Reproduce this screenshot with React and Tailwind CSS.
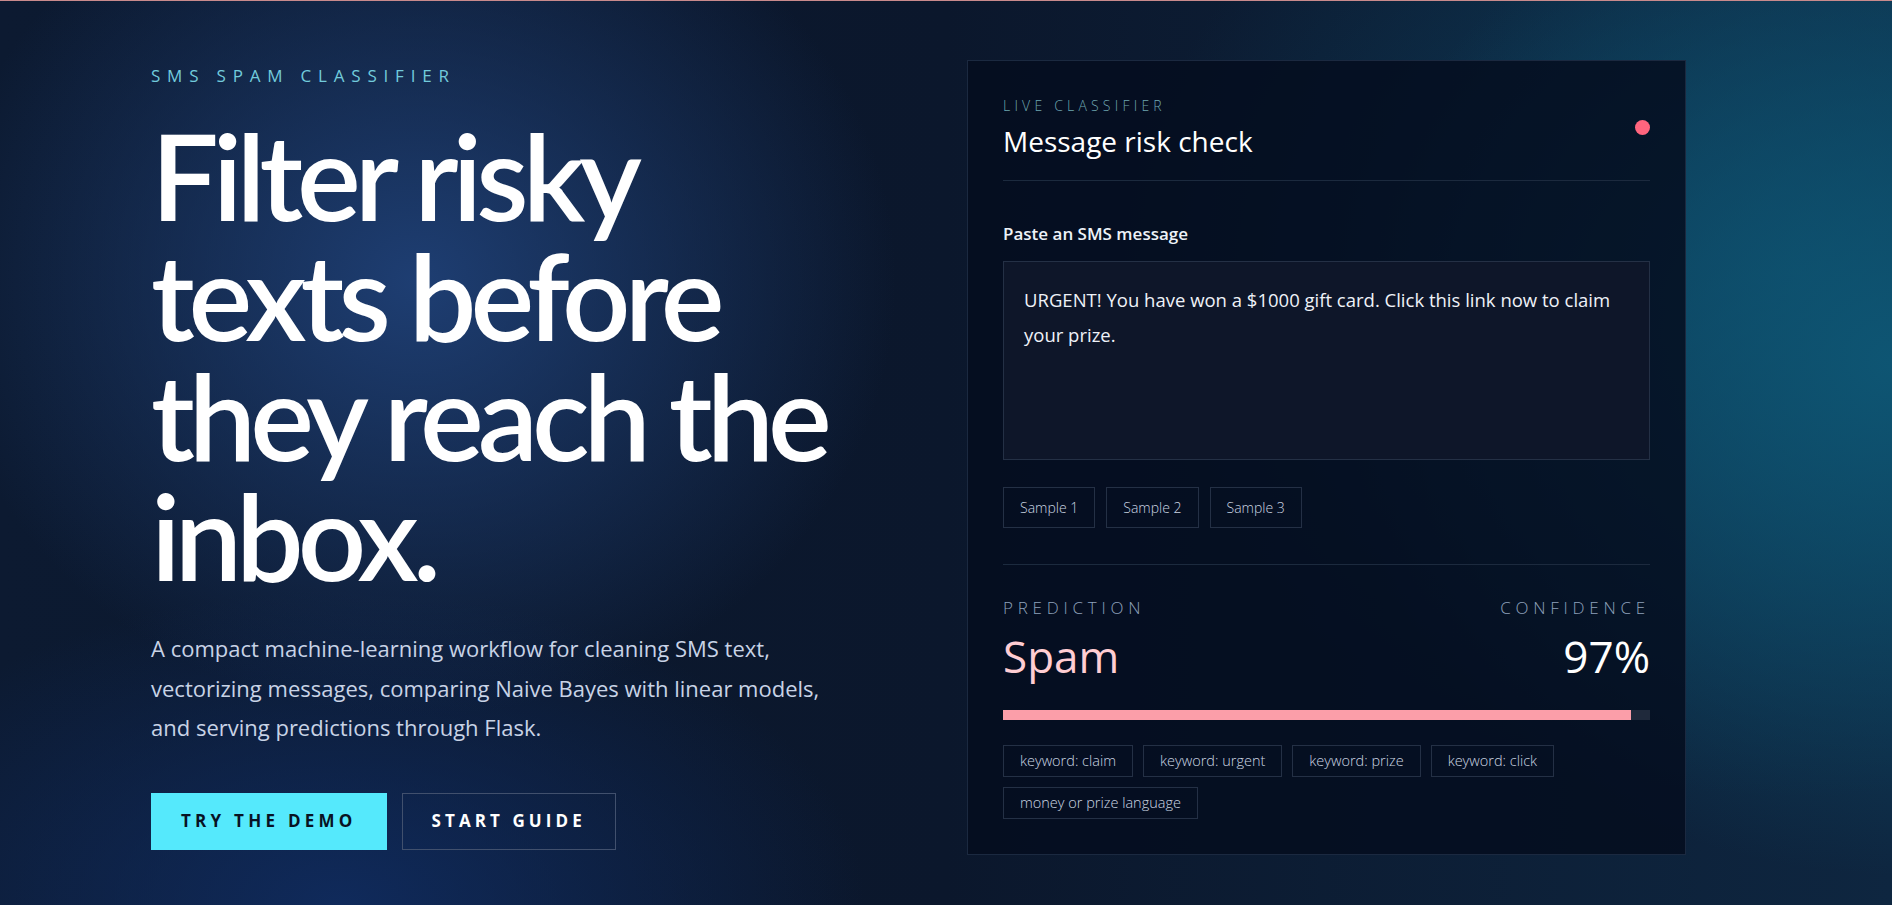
const samples = ['Sample 1', 'Sample 2', 'Sample 3']
const signals = ['keyword: claim', 'keyword: urgent', 'keyword: prize', 'keyword: click', 'money or prize language']

export default function App() {
  const confidence = 97

  return (
    <div className="min-h-[905px] w-full border-t border-[#c98a8c] font-['Open_Sans','Liberation_Sans',sans-serif] text-white bg-[#0b172d] bg-[radial-gradient(ellipse_640px_580px_at_22%_31%,rgba(31,64,118,0.95),transparent_75%),radial-gradient(ellipse_700px_640px_at_100%_40%,rgba(14,88,118,0.9),transparent_80%),radial-gradient(ellipse_900px_700px_at_95%_30%,rgba(13,70,100,0.8),transparent_75%),radial-gradient(ellipse_700px_420px_at_18%_100%,rgba(16,44,96,0.9),transparent_75%),linear-gradient(90deg,#0c1a31,#0b172c_50%,#0e2640)]">
      <div className="flex pl-[151px] pt-[59px]">
        {/* hero copy */}
        <div className="w-[816px] pt-[4px]">
          <p className="text-[17px] leading-[24px] tracking-[0.4em] text-[#72cbdc]">SMS SPAM CLASSIFIER</p>
          <h1 className="mt-[27px] max-w-[700px] font-['Lato','Open_Sans',sans-serif] text-[120px] leading-[120px] font-semibold tracking-[-0.05em]">
            Filter risky texts before they reach the inbox.
          </h1>
          <p className="mt-[34px] max-w-[690px] text-[22px] leading-[39.5px] text-[#c8d3e6]">
            A compact machine-learning workflow for cleaning SMS text, vectorizing messages, comparing Naive Bayes with linear models, and serving predictions through Flask.
          </p>
          <div className="mt-[45px] flex gap-[15px]">
            <button className="h-[57px] bg-[#55e9fc] px-[30px] text-[17px] font-bold tracking-[0.25em] text-[#081223]">TRY THE DEMO</button>
            <button className="h-[57px] border border-[#41506d] px-[29px] text-[17px] font-bold tracking-[0.24em] text-white">START GUIDE</button>
          </div>
        </div>

        {/* classifier card */}
        <div className="w-[719px] h-[795px] border border-[#1b2940] bg-[#050d1f]/85 p-[35px]">
          <div className="flex items-start justify-between border-b border-[#1c2a3e] pb-[21px]">
            <div>
              <p className="text-[14px] leading-[20px] font-light tracking-[0.3em] text-[#6fa6b0]">LIVE CLASSIFIER</p>
              <h2 className="mt-[7px] text-[28px] leading-[36px] text-white">Message risk check</h2>
            </div>
            <span className="mt-[24px] h-[15px] w-[15px] rounded-full bg-[#ff657e]" />
          </div>

          <div className="border-b border-[#1c2a3e] pb-[36px]">
            <label className="mt-[41px] block text-[17px] leading-[24px] font-semibold text-[#eef2f8]">Paste an SMS message</label>
            <textarea
              readOnly
              defaultValue="URGENT! You have won a $1000 gift card. Click this link now to claim your prize."
              className="mt-[15px] block h-[199px] w-full resize-none border border-[#243045] bg-[#0e1629] p-[20px] text-[18.5px] leading-[35px] text-[#eef2f8] outline-none"
            />
            <div className="mt-[27px] flex gap-[11px]">
              {samples.map((s) => (
                <button key={s} className="h-[41px] border border-[#243045] px-[16px] text-[14px] font-light text-[#cbd5e1]">{s}</button>
              ))}
            </div>
          </div>

          <div className="pt-[31px]">
            <div className="flex justify-between text-[17px] leading-[24px] font-light tracking-[0.28em] text-[#8ea1bb]">
              <span>PREDICTION</span>
              <span>CONFIDENCE</span>
            </div>
            <div className="mt-[10px] flex items-baseline justify-between text-[44px] leading-[52px]">
              <span className="font-medium text-[#ffcdd3]">Spam</span>
              <span className="text-white">{confidence}%</span>
            </div>
            <div className="mt-[28px] h-[10px] w-full bg-[#1f293b]">
              <div className="h-full bg-[#fb9ea9]" style={{ width: `${confidence}%` }} />
            </div>
            <div className="mt-[25px] flex flex-wrap gap-x-[10px] gap-y-[10px]">
              {signals.map((t) => (
                <span key={t} className="border border-[#243045] px-[16px] py-[5px] text-[14.5px] leading-[20px] font-light text-[#cbd5e1]">{t}</span>
              ))}
            </div>
          </div>
        </div>
      </div>
    </div>
  )
}
